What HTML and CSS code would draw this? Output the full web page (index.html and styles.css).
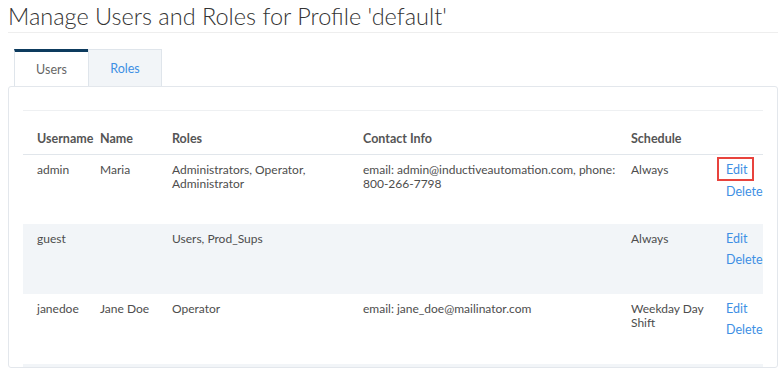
FILE: index.html
```html
<!DOCTYPE html>
<html lang="en">
<head>
    <meta charset="UTF-8">
    <title>Manage Users and Roles</title>
    <link rel="stylesheet" href="styles.css">
</head>
<body>

<h1 class="page-title">Manage Users and Roles for Profile 'default'</h1>

<ul class="tabs">
    <li class="tab active">Users</li>
    <li class="tab">Roles</li>
</ul>

<div class="panel">
    <div class="panel-rule"></div>
    <table class="user-table">
        <colgroup>
            <col class="c-user">
            <col class="c-name">
            <col class="c-roles">
            <col class="c-contact">
            <col class="c-sched">
            <col class="c-actions">
        </colgroup>
        <thead>
            <tr>
                <th>Username</th>
                <th>Name</th>
                <th>Roles</th>
                <th>Contact Info</th>
                <th>Schedule</th>
                <th></th>
            </tr>
        </thead>
        <tbody>
            <tr>
                <td>admin</td>
                <td>Maria</td>
                <td>Administrators, Operator, Administrator</td>
                <td>email: admin@inductiveautomation.com, phone: 800-266-7798</td>
                <td>Always</td>
                <td class="actions">
                    <a href="#" class="highlight">Edit</a>
                    <a href="#">Delete</a>
                </td>
            </tr>
            <tr>
                <td>guest</td>
                <td></td>
                <td>Users, Prod_Sups</td>
                <td></td>
                <td>Always</td>
                <td class="actions">
                    <a href="#">Edit</a>
                    <a href="#">Delete</a>
                </td>
            </tr>
            <tr>
                <td>janedoe</td>
                <td>Jane Doe</td>
                <td>Operator</td>
                <td>email: jane_doe@mailinator.com</td>
                <td>Weekday Day Shift</td>
                <td class="actions">
                    <a href="#">Edit</a>
                    <a href="#">Delete</a>
                </td>
            </tr>
            <tr class="row-stub">
                <td></td>
                <td></td>
                <td></td>
                <td></td>
                <td></td>
                <td></td>
            </tr>
        </tbody>
    </table>
</div>

</body>
</html>
```

FILE: styles.css
```css
* {
    box-sizing: border-box;
}

body {
    margin: 0;
    padding: 0 5px 0 8px;
    font-family: Lato, "Liberation Sans", sans-serif;
    font-size: 12px;
    color: #4d4d4d;
    background: #fff;
}

/* Title */
.page-title {
    margin: 0;
    padding: 3px 0 3px;
    font-size: 23.5px;
    font-weight: 300;
    line-height: 26px;
    color: #333;
    border-bottom: 1px solid #eee;
}

/* Tabs */
.tabs {
    list-style: none;
    margin: 16px 0 0;
    padding: 0 0 0 6px;
    display: flex;
}

.tab {
    width: 74px;
    height: 37px;
    display: flex;
    align-items: center;
    justify-content: center;
    background: #f2f5f8;
    border: 1px solid #dfe5eb;
    border-bottom: none;
    color: #3d8fe4;
    font-size: 12.5px;
}

.tab.active {
    background: #fff;
    color: #666;
    border-top: 3px solid #0d3b5e;
    border-right: none;
}

/* Panel */
.panel {
    border: 1px solid #e3e7ec;
    border-radius: 3px;
    padding: 23px 14px 0;
}

.panel-rule {
    border-top: 1px solid #eef0f2;
}

/* Table */
.user-table {
    width: 100%;
    border-collapse: collapse;
    table-layout: fixed;
}

.c-user { width: 77px; }
.c-name { width: 72px; }
.c-roles { width: 191px; }
.c-contact { width: 268px; }
.c-sched { width: 95px; }

.user-table th {
    text-align: left;
    font-size: 12.5px;
    font-weight: 700;
    color: #555;
    height: 43px;
    padding: 13px 4px 0 0;
    border-bottom: 1px solid #e1e6eb;
    white-space: nowrap;
}

.user-table td {
    height: 70px;
    vertical-align: top;
    padding: 8px 4px 0 0;
    line-height: 14px;
}

.user-table th:first-child,
.user-table td:first-child {
    padding-left: 14px;
}

.user-table tbody tr:nth-child(even) td {
    background: #f2f5f8;
}

.user-table .row-stub td {
    height: 3px;
    padding: 0;
}

.user-table td.actions {
    padding: 2px 0 0 0;
}

.actions a {
    display: block;
    width: 40px;
    margin-left: -9px;
    padding: 4px 0 0 7px;
    border: 2px solid transparent;
    color: #3d8fe4;
    text-decoration: none;
    font-size: 12.5px;
    line-height: 13px;
}

.actions a.highlight {
    border-color: #e8433d;
    width: 37px;
    padding-bottom: 3px;
    margin-bottom: -2px;
}
```
